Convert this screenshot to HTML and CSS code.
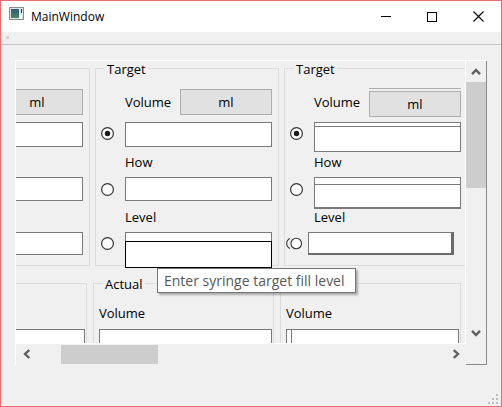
FILE: index.html
```html
<!DOCTYPE html>
<html>
<head>
<meta charset="utf-8">
<title>MainWindow</title>
<link rel="stylesheet" href="styles.css">
</head>
<body>
<div class="window">
  <div class="titlebar">
    <svg class="app-icon" width="15" height="13" viewBox="0 0 15 13">
      <defs><linearGradient id="ig" x1="0" y1="0" x2="0" y2="1"><stop offset="0" stop-color="#2a5d7a"/><stop offset="1" stop-color="#3f8a64"/></linearGradient></defs>
      <rect x="0.5" y="0.5" width="14" height="12" fill="#e4e4e4" stroke="#8a8a8a"/>
      <rect x="2" y="2" width="8" height="9" fill="url(#ig)"/>
      <rect x="10" y="8" width="3" height="3" fill="#ffffff"/>
      <rect x="12" y="2" width="1" height="4" fill="#303030"/>
    </svg>
    <span class="title">MainWindow</span>
    <div class="caption">
      <div class="cbtn"><svg width="10" height="10" viewBox="0 0 10 10"><rect x="0" y="4" width="10" height="1" fill="#000"/></svg></div>
      <div class="cbtn"><svg width="10" height="10" viewBox="0 0 10 10"><rect x="0.5" y="0.5" width="9" height="9" fill="none" stroke="#000" stroke-width="1"/></svg></div>
      <div class="cbtn"><svg width="11" height="11" viewBox="0 0 11 11"><path d="M0.5 0.5 L10.5 10.5 M10.5 0.5 L0.5 10.5" stroke="#000" stroke-width="1.1" fill="none"/></svg></div>
    </div>
  </div>
  <div class="menubar"><span class="grip"></span></div>
  <div class="central">
    <div class="frame">
      <div class="viewport">
        <div class="row top-row">
          <div class="group">
            <div class="g-vol"><span class="btn">ml</span></div>
            <span class="le g-le1"></span>
            <span class="le g-le2"></span>
            <span class="le g-le3"></span>
          </div>
          <div class="group">
            <span class="gtitle">Target</span>
            <div class="g-vol"><span class="lbl">Volume</span><span class="btn">ml</span></div>
            <span class="radio g-rad1"><svg width="13" height="13" viewBox="0 0 13 13"><circle cx="6.5" cy="6.5" r="5.9" fill="#fff" stroke="#333" stroke-width="1.2"/><circle cx="6.5" cy="6.5" r="2.7" fill="#1a1a1a"/></svg></span>
            <span class="le g-le1"></span>
            <span class="lbl g-how">How</span>
            <span class="radio g-rad2"><svg width="13" height="13" viewBox="0 0 13 13"><circle cx="6.5" cy="6.5" r="5.9" fill="#fff" stroke="#333" stroke-width="1.2"/></svg></span>
            <span class="le g-le2"></span>
            <span class="lbl g-level">Level</span>
            <span class="radio g-rad3"><svg width="13" height="13" viewBox="0 0 13 13"><circle cx="6.5" cy="6.5" r="5.9" fill="#fff" stroke="#333" stroke-width="1.2"/></svg></span>
            <span class="le g-le3 focused"></span>
          </div>
          <div class="group">
            <span class="gtitle">Target</span>
            <div class="g-vol"><span class="lbl">Volume</span><span class="btn ghost">ml</span></div>
            <span class="radio g-rad1"><svg width="13" height="13" viewBox="0 0 13 13"><circle cx="6.5" cy="6.5" r="5.9" fill="#fff" stroke="#333" stroke-width="1.2"/><circle cx="6.5" cy="6.5" r="2.7" fill="#1a1a1a"/></svg></span>
            <span class="le g-le1 ghost1"></span>
            <span class="lbl g-how">How</span>
            <span class="radio g-rad2"><svg width="13" height="13" viewBox="0 0 13 13"><circle cx="6.5" cy="6.5" r="5.9" fill="#fff" stroke="#333" stroke-width="1.2"/></svg></span>
            <span class="le g-le2 ghost2"></span>
            <span class="lbl g-level">Level</span>
            <span class="radio g-rad3 ghost-radio"><svg width="20" height="15" viewBox="0 0 20 15"><path d="M5.5 2 A6 6 0 0 0 5.5 13" fill="none" stroke="#333" stroke-width="1.2"/><circle cx="12.5" cy="7.5" r="5.9" fill="#fff" stroke="#333" stroke-width="1.2"/></svg></span>
            <span class="le g-le3 ghost3"></span>
          </div>
        </div>
        <div class="row bottom-row">
          <div class="group bgroup">
            <span class="lbl"></span>
            <span class="le"></span>
          </div>
          <div class="group bgroup">
            <span class="gtitle">Actual</span>
            <span class="lbl">Volume</span>
            <span class="le"></span>
          </div>
          <div class="group bgroup">
            <span class="lbl">Volume</span>
            <span class="le double-left"></span>
          </div>
        </div>
      </div>
      <div class="vscroll">
        <div class="sarrow v"><svg width="10" height="7" viewBox="0 0 10 7"><path d="M1 6.2 L5 2 L9 6.2" fill="none" stroke="#606060" stroke-width="2.4"/></svg></div>
        <div class="vthumb"></div>
        <div class="sarrow v down"><svg width="10" height="7" viewBox="0 0 10 7"><path d="M1 0.8 L5 5 L9 0.8" fill="none" stroke="#606060" stroke-width="2.4"/></svg></div>
      </div>
      <div class="hscroll">
        <div class="sarrow h"><svg width="7" height="10" viewBox="0 0 7 10"><path d="M6.2 1 L2 5 L6.2 9" fill="none" stroke="#606060" stroke-width="2.4"/></svg></div>
        <div class="hthumb"></div>
        <div class="sarrow h right"><svg width="7" height="10" viewBox="0 0 7 10"><path d="M0.8 1 L5 5 L0.8 9" fill="none" stroke="#606060" stroke-width="2.4"/></svg></div>
      </div>
      <div class="corner"></div>
    </div>
    <div class="grip-row">
      <svg width="11" height="11" viewBox="0 0 11 11">
        <rect x="9" y="1" width="2" height="2" fill="#bdbdbd"/>
        <rect x="5" y="5" width="2" height="2" fill="#bdbdbd"/>
        <rect x="9" y="5" width="2" height="2" fill="#bdbdbd"/>
        <rect x="1" y="9" width="2" height="2" fill="#bdbdbd"/>
        <rect x="5" y="9" width="2" height="2" fill="#bdbdbd"/>
        <rect x="9" y="9" width="2" height="2" fill="#bdbdbd"/>
      </svg>
    </div>
  </div>
  <div class="tooltip">Enter syringe target fill level</div>
</div>
</body>
</html>
```
FILE: styles.css
```css
* { box-sizing: border-box; margin: 0; padding: 0; }
html, body { width: 502px; height: 407px; overflow: hidden; }
body { font-family: "Open Sans", "Noto Sans", sans-serif; background: #fff; color: #000; }

.window {
  width: 502px; height: 407px;
  border: 1px solid #e46f6f;
  background: #f0f0f0;
  display: flex; flex-direction: column;
  position: relative; overflow: hidden;
}

.titlebar {
  height: 31px; flex: none; background: #fff;
  display: flex; align-items: center; padding-left: 8px;
}
.app-icon { flex: none; align-self: flex-start; margin-top: 6px; }
.title { margin-left: 7px; font-size: 12px; }
.caption { margin-left: auto; display: flex; align-self: stretch; }
.cbtn { width: 46px; display: flex; align-items: center; justify-content: center; }
.cbtn svg { display: block; }

.menubar { height: 13px; flex: none; border-bottom: 1px solid #c4c4c4; padding: 4px 0 0 5px; }
.grip { display: block; width: 3px; height: 3px; background: #d0d0d0; }

.central { flex: 1; display: flex; flex-direction: column; padding: 15px 14px 2px 14px; }

.frame {
  display: grid;
  grid-template-columns: 450px 21px;
  grid-template-rows: 283px 21px;
  width: 472px;
  border-top: 1px solid #fff; border-left: 1px solid #fff;
}
.viewport { border-right: 1px solid #fff; border-bottom: 1px solid #fff; overflow: hidden; }

.row { display: flex; }
.top-row { gap: 5px; margin: 7px 0 0 -110px; }
.bottom-row { gap: 6px; margin: 17px 0 0 -110px; }

.group {
  position: relative; flex: none;
  border: 1px solid #dcdcdc;
}
.top-row .group {
  width: 184px; height: 198px;
  display: grid;
  grid-template-columns: 13px 147px;
  grid-template-rows: 26px 32px 30px 24px 31px 23px;
  column-gap: 11px;
  padding: 20px 6px 10px 5px;
}
.gtitle {
  position: absolute; top: -8px; left: 9px;
  padding: 0 2px; background: #f0f0f0;
  font-size: 13px; line-height: 16px;
}

.lbl { font-size: 13px; line-height: 18px; min-height: 18px; }
.g-vol { grid-area: 1 / 2; display: flex; align-items: center; }
.btn {
  margin-left: auto; width: 92px; height: 26px;
  background: #e1e1e1; border: 1px solid #adadad;
  font-size: 13px; display: flex; align-items: center; justify-content: center;
  position: relative;
}
.btn.ghost { align-self: flex-start; margin-top: 2px; }
.btn.ghost::before {
  content: ""; position: absolute; left: -1px; right: -1px; top: -4px; height: 1px; background: #adadad;
}

.le { display: block; background: #fff; border: 1px solid #7a7a7a; position: relative; }
.radio { display: flex; }
.radio svg { display: block; }

.g-rad1 { grid-area: 2 / 1; align-self: end; margin-bottom: 7px; }
.g-le1 { grid-area: 2 / 2; align-self: end; height: 25px; }
.g-how { grid-area: 3 / 2; align-self: center; }
.g-rad2 { grid-area: 4 / 1; align-self: center; }
.g-le2 { grid-area: 4 / 2; }
.g-level { grid-area: 5 / 2; align-self: center; }
.g-rad3 { grid-area: 6 / 1; align-self: center; }
.g-le3 { grid-area: 6 / 2; }

.focused::after {
  content: ""; position: absolute; top: 8px; left: -1px; right: -1px; height: 25px;
  background: #fff; border: 1px solid #000;
}

.ghost1 { align-self: start; margin-top: 7px; height: 30px; box-shadow: inset 0 3px 0 #fff, inset 0 4px 0 #7a7a7a; }
.ghost2 { height: 32px; align-self: start; border-bottom-width: 2px; box-shadow: inset 0 6px 0 #fff, inset 0 7px 0 #7a7a7a; }
.ghost3 { justify-self: start; width: 146px; margin-left: -6px; border-right: 3px solid #6a6a6a; border-bottom: 2px solid #6a6a6a; }
.ghost-radio { margin-left: -5px; }

.bgroup {
  width: 181px; height: 80px;
  display: flex; flex-direction: column; align-items: flex-start;
  padding: 20px 6px 0 5px;
}
.bgroup .le { width: 173px; height: 24px; margin-top: 7px; }
.double-left { box-shadow: inset 4px 0 0 #fff, inset 5px 0 0 #7a7a7a; }

.vscroll { border-right: 1px solid #8a8a8a; display: flex; flex-direction: column; }
.sarrow { display: flex; align-items: center; justify-content: center; flex: none; }
.sarrow svg { display: block; }
.sarrow.v { height: 21px; }
.sarrow.v.down { margin-top: auto; }
.vthumb { width: 20px; height: 106px; background: #cdcdcd; flex: none; }

.hscroll { display: flex; align-items: flex-start; }
.sarrow.h { width: 20px; height: 20px; }
.sarrow.h.right { margin-left: auto; }
.hthumb { width: 97px; height: 19px; margin: 1px 0 0 25px; background: #cdcdcd; flex: none; }

.corner { border-right: 1px solid #8a8a8a; border-bottom: 1px solid #8a8a8a; }

.grip-row { margin-top: auto; display: flex; justify-content: flex-end; margin-right: -11px; }
.grip-row svg { display: block; }

.tooltip {
  position: absolute; left: 156px; top: 267px;
  width: 199px; height: 25px;
  background: #fff; border: 1px solid #767676;
  box-shadow: 2px 2px 2px rgba(0,0,0,0.3);
  color: #575757; font-size: 14px; line-height: 23px;
  padding: 0 6px; white-space: nowrap;
}
```
